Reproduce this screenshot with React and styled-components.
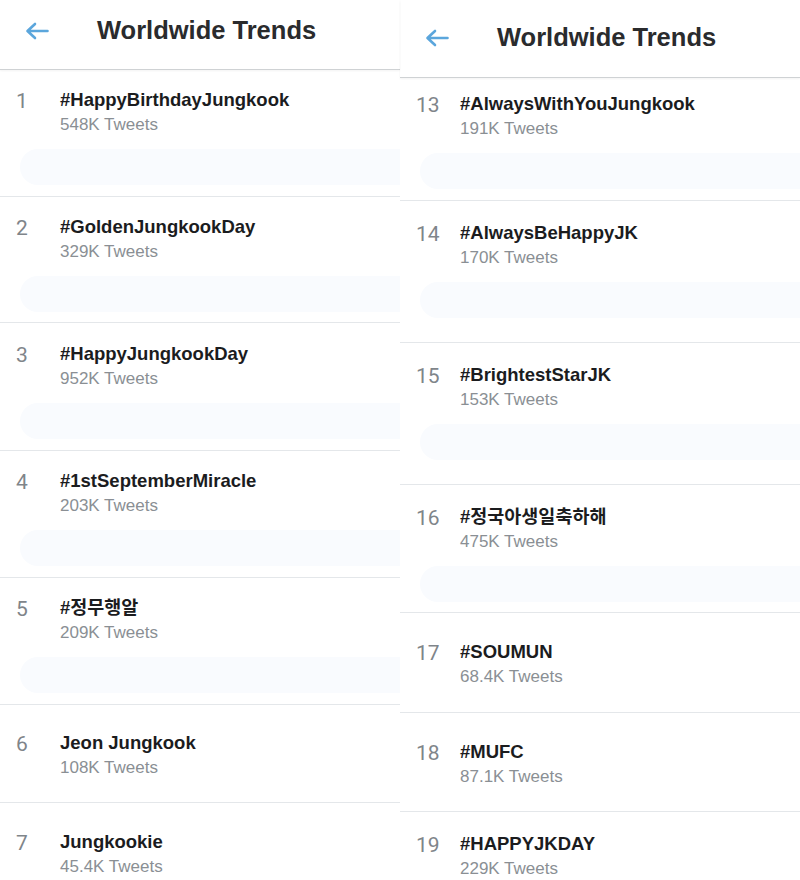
import styled, { createGlobalStyle } from "styled-components";

const GlobalStyle = createGlobalStyle`
  html, body {
    margin: 0;
    padding: 0;
    background: #ffffff;
  }
  body {
    font-family: "Liberation Sans", Arial, sans-serif;
  }
`;

const leftColumn = {
  headerHeight: 70,
  headerLift: 8,
  rows: [
    { n: 1, title: "#HappyBirthdayJungkook", count: "548K Tweets", h: 127, pt: 19, ghost: true },
    { n: 2, title: "#GoldenJungkookDay", count: "329K Tweets", h: 126, pt: 19, ghost: true },
    { n: 3, title: "#HappyJungkookDay", count: "952K Tweets", h: 128, pt: 20, ghost: true },
    { n: 4, title: "#1stSeptemberMiracle", count: "203K Tweets", h: 127, pt: 19, ghost: true },
    { n: 5, title: "#정무행알", count: "209K Tweets", h: 127, pt: 19, ghost: true },
    { n: 6, title: "Jeon Jungkook", count: "108K Tweets", h: 98, pt: 27 },
    { n: 7, title: "Jungkookie", count: "45.4K Tweets", h: 100, pt: 28, last: true },
  ],
};

const rightColumn = {
  headerHeight: 78,
  headerLift: 2,
  rows: [
    { n: 13, title: "#AlwaysWithYouJungkook", count: "191K Tweets", h: 123, pt: 15, ghost: true },
    { n: 14, title: "#AlwaysBeHappyJK", count: "170K Tweets", h: 142, pt: 21, ghost: true },
    { n: 15, title: "#BrightestStarJK", count: "153K Tweets", h: 142, pt: 21, ghost: true },
    { n: 16, title: "#정국아생일축하해", count: "475K Tweets", h: 128, pt: 21, ghost: true },
    { n: 17, title: "#SOUMUN", count: "68.4K Tweets", h: 100, pt: 28 },
    { n: 18, title: "#MUFC", count: "87.1K Tweets", h: 99, pt: 28 },
    { n: 19, title: "#HAPPYJKDAY", count: "229K Tweets", h: 100, pt: 21, last: true },
  ],
};

function BackArrow() {
  return (
    <svg width="24" height="18" viewBox="0 0 24 18" fill="none">
      <path
        d="M22.5 9H3 M10 2L2.5 9L10 16"
        stroke="#5ba6dc"
        strokeWidth="2.6"
        strokeLinecap="round"
        strokeLinejoin="round"
      />
    </svg>
  );
}

function TrendColumn({ data }) {
  return (
    <Column>
      <Header $h={data.headerHeight} $lift={data.headerLift}>
        <BackArrow />
        <HeaderTitle>Worldwide Trends</HeaderTitle>
      </Header>
      {data.rows.map((r) => (
        <Row key={r.n} $h={r.h} $pt={r.pt} $last={r.last}>
          <Rank>{r.n}</Rank>
          <Info>
            <Title>{r.title}</Title>
            <Count>{r.count}</Count>
          </Info>
          {r.ghost && <Ghost />}
        </Row>
      ))}
    </Column>
  );
}

export default function App() {
  return (
    <>
      <GlobalStyle />
      <Page>
        <TrendColumn data={leftColumn} />
        <TrendColumn data={rightColumn} />
      </Page>
    </>
  );
}

const Page = styled.div`
  display: grid;
  grid-template-columns: 400px 400px;
  width: 800px;
  height: 880px;
  overflow: hidden;
  background: #ffffff;
`;

const Column = styled.div`
  display: flex;
  flex-direction: column;
  min-width: 0;
`;

const Header = styled.div`
  box-sizing: border-box;
  height: ${(p) => p.$h}px;
  flex-shrink: 0;
  display: flex;
  align-items: center;
  gap: 48px;
  padding-left: 25px;
  padding-bottom: ${(p) => p.$lift}px;
  border-bottom: 1px solid #cfd2d4;
  box-shadow: 0 1px 2px rgba(0, 0, 0, 0.05);
`;

const HeaderTitle = styled.h1`
  margin: 0;
  font-family: "Liberation Sans", Arial, sans-serif;
  font-size: 25.5px;
  font-weight: 700;
  color: #2a2b2d;
`;

const Row = styled.div`
  box-sizing: border-box;
  height: ${(p) => p.$h}px;
  flex-shrink: 0;
  display: grid;
  grid-template-columns: 60px 1fr;
  grid-template-rows: auto 1fr;
  align-content: start;
  padding-top: ${(p) => p.$pt}px;
  border-bottom: ${(p) => (p.$last ? "none" : "1px solid #e4e7ea")};
`;

const Rank = styled.div`
  padding-left: 16px;
  font-family: Roboto, "Liberation Sans", sans-serif;
  font-size: 21px;
  font-weight: 400;
  line-height: 24px;
  color: #7f858a;
`;

const Info = styled.div`
  display: flex;
  flex-direction: column;
`;

const Title = styled.div`
  font-family: "Liberation Sans", "Noto Sans CJK KR", sans-serif;
  font-size: 18.5px;
  font-weight: 700;
  line-height: 22px;
  color: #1b1c1e;
`;

const Count = styled.div`
  margin-top: 4px;
  font-family: "Liberation Sans", Arial, sans-serif;
  font-size: 17px;
  line-height: 20px;
  color: #8a8f94;
`;

const Ghost = styled.div`
  grid-column: 1 / -1;
  margin: 14px 0 8px 20px;
  height: 36px;
  border-radius: 18px 0 0 18px;
  background: #f9fbfe;
`;
